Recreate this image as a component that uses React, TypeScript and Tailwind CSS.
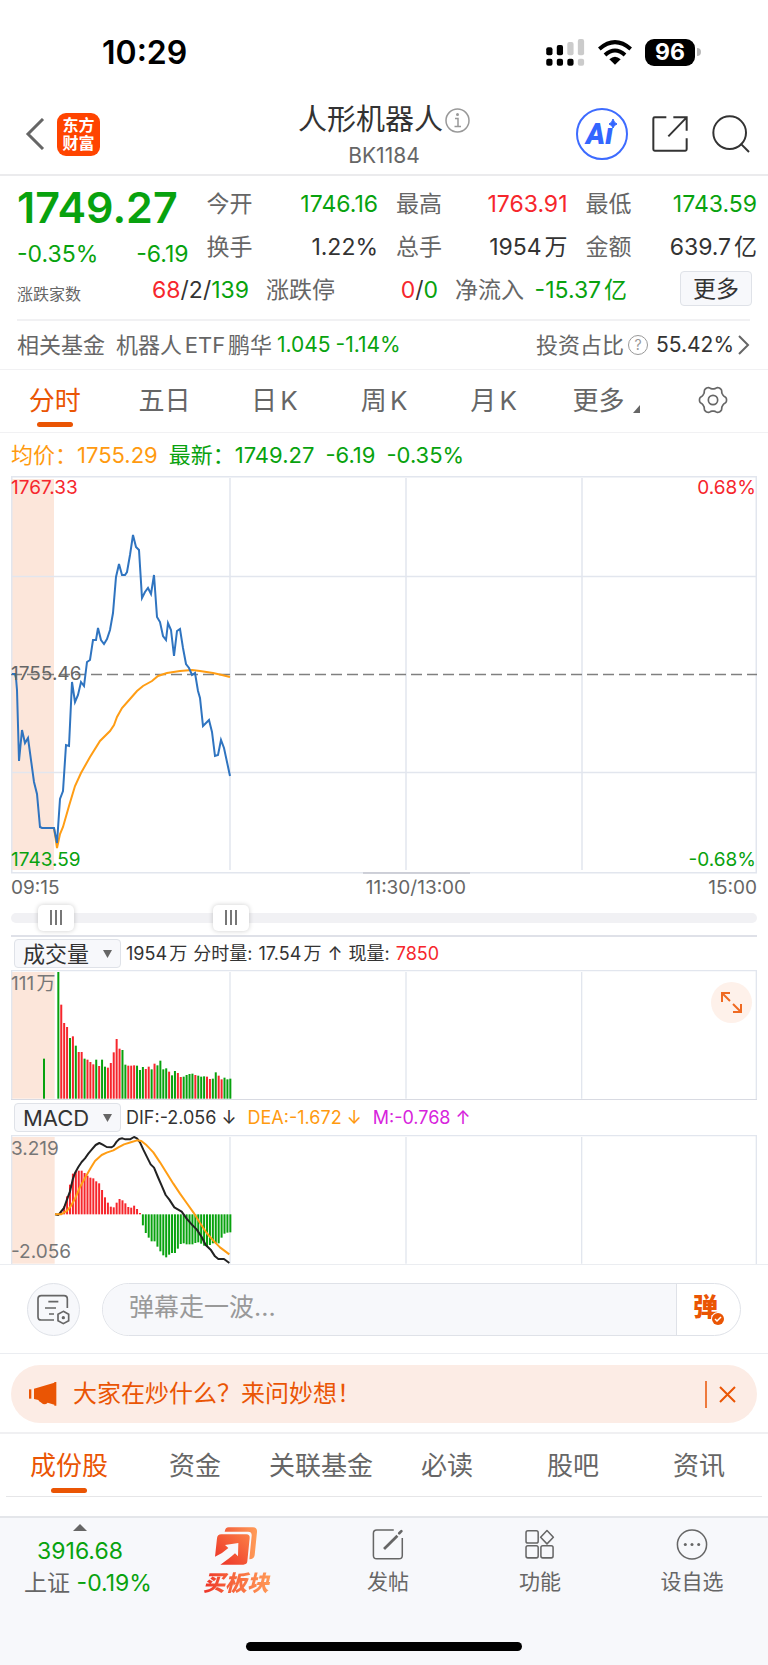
import { useState } from "react";

const priceLine =
  "1,198 4,198 5,202 6,214 8,285 11,254 14,267 17,262 23,306 26,318 29,351 31,352 43,352 46,367 49,323 52,315 55,269 58,270 61,206 64,226 67,219 70,206 73,210 76,186 79,184 82,164 85,164 87,152 90,164 93,168 96,163 99,154 102,137 105,101 108,88 111,99 114,99 116,96 119,79 122,59 125,71 128,74 131,122 134,116 137,112 140,118 143,99 146,141 149,146 152,160 155,164 157,147 160,154 163,180 166,155 169,153 172,172 175,188 178,192 181,199 184,197 187,215 189,222 192,250 198,244 201,256 204,280 207,279 210,264 213,272 219,300";

const averageLine =
  "43,352 46,372 49,358 52,351 58,330 64,310 70,297 79,281 89,265 99,255 103,249 106,241 111,232 119,223 126,215 132,210 141,205 147,200 156,197 169,195 181,194 189,195 202,197 211,199 219,201";

// [height, up/down] for every minute since the open
const volumeBars: [number, string][] = [
  [380, "d"], [282, "u"], [227, "u"], [215, "u"], [182, "d"], [187, "u"], [159, "d"], [140, "u"], [140, "u"], [120, "d"],
  [117, "u"], [110, "u"], [103, "u"], [117, "d"], [98, "u"], [117, "d"], [96, "d"], [93, "u"], [107, "u"], [139, "u"],
  [179, "u"], [150, "u"], [146, "d"], [102, "d"], [99, "u"], [99, "u"], [100, "u"], [99, "d"], [86, "d"], [95, "d"],
  [89, "u"], [96, "u"], [88, "d"], [105, "u"], [100, "d"], [114, "d"], [88, "d"], [91, "d"], [81, "u"], [70, "d"],
  [83, "d"], [77, "u"], [65, "u"], [66, "d"], [71, "d"], [74, "d"], [75, "d"], [71, "u"], [69, "d"], [66, "d"],
  [67, "d"], [66, "u"], [59, "u"], [60, "d"], [79, "d"], [69, "u"], [58, "u"], [63, "d"], [58, "d"], [60, "d"],
];

const macdBars = [
  0, 9, 24, 54, 89, 122, 127, 131, 131, 124, 116, 110, 108, 99, 93, 73, 51, 35, 23, 21, 35, 46, 42, 33, 22, 20, 26, 16, 4,
  -33, -56, -70, -81, -81, -97, -111, -123, -129, -121, -116, -116, -103, -89, -87, -90, -90, -90, -86, -84, -88, -94,
  -96, -92, -87, -87, -87, -70, -58, -55, -54,
];

const difLine =
  "132,238 142,240 150,230 159,219 167,196 177,169 185,134 192,114 202,96 212,81 222,70 232,56 242,44 254,30 265,24 275,29 287,36 301,37 308,33 317,20 325,12 334,10 343,13 357,13 369,6 378,10 387,22 397,44 407,64 419,88 429,98 442,129 452,152 464,180 475,194 490,217 512,230 527,251 542,268 557,283 572,306 584,330 599,344 612,364 622,372 639,372 655,384";

const deaLine =
  "132,238 150,238 167,228 179,214 192,191 207,156 222,129 239,99 252,78 272,60 287,53 307,46 322,37 339,28 362,21 378,16 391,18 407,31 427,52 447,82 467,114 487,146 507,176 527,204 547,232 567,264 587,294 607,317 627,337 655,358";

const GREEN = "#08a20e";
const RED = "#f6262c";

function SignalIcon() {
  return (
    <svg className="w-[39px] h-[27px]" viewBox="0 0 117 82">
      <rect x="0" y="25" width="19" height="24" rx="6" />
      <rect x="32" y="18" width="19" height="31" rx="6" />
      <rect x="64" y="9" width="19" height="40" rx="6" fill="#cbcbcb" />
      <rect x="96" y="0" width="19" height="49" rx="6" fill="#cbcbcb" />
      <rect x="0" y="60" width="19" height="21" rx="6" />
      <rect x="32" y="60" width="19" height="21" rx="6" />
      <rect x="64" y="60" width="19" height="21" rx="6" />
      <rect x="96" y="60" width="19" height="21" rx="6" fill="#cbcbcb" />
    </svg>
  );
}

function WifiIcon() {
  return (
    <svg className="w-[34px] h-[25px]" viewBox="0 0 102 75" fill="none" stroke="#000" strokeWidth="12">
      <path d="M4 27 Q51 -14 98 27" />
      <path d="M21 45 Q51 18 81 45" />
      <path d="M51 74 L34 58 Q51 43 68 58 Z" fill="#000" stroke="none" />
    </svg>
  );
}

function StatusBar() {
  return (
    <div className="h-[98px] pt-[6px] pl-[102px] pr-[67px] flex items-center justify-between">
      <span className="pt-[2px] text-[32px] leading-[40px] font-semibold text-black">10:29</span>
      <div className="flex items-center gap-[13px]">
        <SignalIcon />
        <WifiIcon />
        <div className="flex items-center gap-[2px]">
          <span className="w-[50px] h-[27px] rounded-[9px] bg-black text-white text-[23px] leading-[27px] font-bold text-center">
            96
          </span>
          <span className="w-[4px] h-[8px] rounded-r-full bg-[#b8b8b8]" />
        </div>
      </div>
    </div>
  );
}

function AiIcon() {
  return (
    <svg className="w-[52px] h-[52px]" viewBox="0 0 52 52">
      <circle cx="26" cy="26" r="25" fill="none" stroke="#3d6bff" strokeWidth="2" />
      <text x="10" y="36" fontFamily="Roboto" fontSize="29" fontWeight="900" fontStyle="italic" fill="#3366ff">
        Ai
      </text>
      <rect x="31" y="10" width="12" height="10" fill="#fff" />
      <path d="M37 11 Q38 15 41 16 Q38 17 37 20 Q36 17 33 16 Q36 15 37 11 Z" fill="#3366ff" stroke="#3366ff" />
    </svg>
  );
}

function Header() {
  return (
    <header className="h-[78px] px-[18px] pb-1 grid grid-cols-[1fr_auto_1fr] items-center border-b-2 border-[#ebebed]">
      <div className="flex items-center gap-3 pl-[7px]">
        <button aria-label="返回">
          <svg className="w-[20px] h-[32px]" viewBox="0 0 20 32" fill="none" stroke="#666" strokeWidth="3">
            <path d="M18 1 L3 16 L18 31" />
          </svg>
        </button>
        <div className="w-[43px] h-[43px] rounded-[9px] bg-[#ff4400] flex flex-col items-center justify-center text-white text-[16px] leading-[18px] font-bold">
          <span>东方</span>
          <span>财富</span>
        </div>
      </div>
      <div className="text-center">
        <h1 className="flex items-center justify-center gap-[2px] text-[29px] leading-[44px] text-[#333]">
          人形机器人
          <svg className="w-[25px] h-[25px]" viewBox="0 0 25 25" fill="none" stroke="#999">
            <circle cx="12.500" cy="12.500" r="11.500" strokeWidth="1.500" />
            <path d="M10 10.500 H13 V18.500 M9.500 18.500 H16" strokeWidth="1.500" />
            <circle cx="12.500" cy="6.500" r="1.500" fill="#999" stroke="none" />
          </svg>
        </h1>
        <p className="text-[21px] leading-[28px] text-[#666]">BK1184</p>
      </div>
      <div className="flex items-center justify-end gap-6">
        <button aria-label="AI">
          <AiIcon />
        </button>
        <button aria-label="分享">
          <svg className="w-[36px] h-[36px]" viewBox="0 0 108 108" fill="none" stroke="#333" strokeWidth="6">
            <path d="M43 4 H8 Q4 4 4 8 V100 Q4 104 8 104 H100 Q104 104 104 100 V67" />
            <path d="M64 4 H104 V44 M104 4 L49 61" />
          </svg>
        </button>
        <button aria-label="搜索">
          <svg className="w-[38px] h-[38px]" viewBox="0 0 114 114" fill="none" stroke="#333" strokeWidth="6">
            <circle cx="53" cy="53" r="49" />
            <path d="M86 86 L111 111" />
          </svg>
        </button>
      </div>
    </header>
  );
}

function Quote({ label, value, color }: { label: string; value: string; color: string }) {
  return (
    <div className="h-[43px] flex items-center justify-between">
      <span className="text-[#666]">{label}</span>
      <span className={color}>{value}</span>
    </div>
  );
}

function QuoteBoard() {
  return (
    <section className="pl-[17px] pr-[11px] pt-[7px] text-[23px] text-[#333]">
      <div className="grid grid-cols-4 gap-x-[18px]">
        <div className="row-span-2 flex flex-col justify-between text-[#08a20e]">
          <span className="text-[43px] leading-[48px] font-semibold">1749.27</span>
          <div className="flex justify-between leading-[30px]">
            <span>-0.35%</span>
            <span>-6.19</span>
          </div>
        </div>
        <Quote label="今开" value="1746.16" color="text-[#08a20e]" />
        <Quote label="最高" value="1763.91" color="text-[#f6262c]" />
        <Quote label="最低" value="1743.59" color="text-[#08a20e]" />
        <Quote label="换手" value="1.22%" color="text-[#333]" />
        <Quote label="总手" value="1954万" color="text-[#333]" />
        <Quote label="金额" value="639.7亿" color="text-[#333]" />
      </div>
      <div className="h-[43px] grid grid-cols-[232fr_172fr_172fr_113fr] gap-x-[17px] items-center">
        <div className="flex items-center justify-between">
          <span className="text-base text-[#666] pt-[6px]">涨跌家数</span>
          <span>
            <span className="text-[#f6262c]">68</span>/2/<span className="text-[#08a20e]">139</span>
          </span>
        </div>
        <div className="flex items-center justify-between">
          <span className="text-[#666]">涨跌停</span>
          <span>
            <span className="text-[#f6262c]">0</span>/<span className="text-[#08a20e]">0</span>
          </span>
        </div>
        <div className="flex items-center justify-between">
          <span className="text-[#666]">净流入</span>
          <span className="text-[#08a20e]">-15.37亿</span>
        </div>
        <button className="justify-self-end mr-[5px] mb-1 w-[72px] h-[35px] rounded border border-[#dfe2e8] bg-[#f7f8fb] leading-[32px]">
          更多
        </button>
      </div>
      <div className="mt-[7px] mr-[7px] h-[50px] border-t-2 border-[#f1f1f3] flex items-center justify-between text-[21px]">
        <div className="flex items-center gap-[5px]">
          <span className="mr-[6px] text-[22px] text-[#666]">相关基金</span>
          <span className="text-[22px] text-[#666]">机器人ETF鹏华</span>
          <span className="text-[#08a20e]">1.045</span>
          <span className="text-[#08a20e]">-1.14%</span>
        </div>
        <div className="flex items-center gap-[4px]">
          <span className="text-[22px] text-[#666]">投资占比</span>
          <span className="w-[20px] h-[20px] mr-1 rounded-full border border-[#999] text-[#999] text-sm leading-[18px] text-center">
            ?
          </span>
          <span>55.42%</span>
          <svg className="w-[12px] h-[20px]" viewBox="0 0 12 20" fill="none" stroke="#666" strokeWidth="2">
            <path d="M1 1 L10 10 L1 19" />
          </svg>
        </div>
      </div>
    </section>
  );
}

function GearIcon() {
  const points = Array.from({ length: 72 }, (_, i) => {
    const angle = (i / 72) * Math.PI * 2;
    const r = 37 + 4 * Math.tanh(1.5 * Math.cos(6 * angle));
    return `${45 + r * Math.cos(angle)},${45 + r * Math.sin(angle)}`;
  });
  return (
    <svg className="w-[30px] h-[30px]" viewBox="0 0 90 90" fill="none" stroke="#666" strokeWidth="5">
      <polygon points={points.join(" ")} strokeLinejoin="round" />
      <circle cx="45" cy="45" r="14" />
    </svg>
  );
}

const periods = ["分时", "五日", "日K", "周K", "月K", "更多"];

function PeriodTabs() {
  const [active, setActive] = useState("分时");
  return (
    <nav className="h-[64px] grid grid-cols-7 border-y border-[#f1f1f3] text-[26px]">
      {periods.map((name) => (
        <button
          key={name}
          onClick={() => setActive(name)}
          className={`relative flex items-center justify-center pb-[2px] ${active === name ? "text-[#ea5504]" : "text-[#666]"} ${name === "更多" ? "pr-[10px]" : ""}`}
        >
          {name}
          {active === name && <span className="absolute bottom-[5px] w-[36px] h-[5px] rounded-full bg-[#ea5504]" />}
          {name === "更多" && (
            <svg className="absolute right-[18px] bottom-[19px] w-[7px] h-[8px]" viewBox="0 0 7 8" fill="#666">
              <path d="M7 0 V8 H0 Z" />
            </svg>
          )}
        </button>
      ))}
      <button aria-label="设置" className="flex items-center justify-center pb-[2px]">
        <GearIcon />
      </button>
    </nav>
  );
}

function PriceChart() {
  return (
    <section className="mx-[11px]">
      <div className="h-[43px] pt-[2px] flex items-center gap-[11px] text-[22px] text-[#08a20e]">
        <span className="text-[#ff9a0f]">均价：1755.29</span>
        <span>最新：1749.27</span>
        <span>-6.19</span>
        <span>-0.35%</span>
      </div>
      <div className="relative text-[19px] leading-[22px]">
        <svg className="block w-full" viewBox="0 0 746 398" fill="none">
          <rect x="1" y="3" width="42" height="391" fill="#fce6da" />
          <g stroke="#e2e6ee" strokeWidth="1.500">
            <rect x="0.750" y="0.750" width="744.500" height="396" />
            <path d="M0 100.500 H746 M0 296.500 H746 M219 2 V394 M395 2 V394 M571 2 V394" />
          </g>
          <path d="M0 198.500 H746" stroke="#808080" strokeWidth="1.500" strokeDasharray="11 5" />
          <path d="M352 397 H459" stroke="#c4c6cf" strokeWidth="1.500" />
          <polyline points={averageLine} stroke="#ff9d14" strokeWidth="2" />
          <polyline points={priceLine} stroke="#2f74c0" strokeWidth="2" />
        </svg>
        <span className="absolute left-0 top-[1px] text-[#f6262c]">1767.33</span>
        <span className="absolute right-[1px] top-[1px] text-[#f6262c]">0.68%</span>
        <span className="absolute left-0 top-[187px] text-[#666]">1755.46</span>
        <span className="absolute left-0 bottom-[3px] text-[#08a20e]">1743.59</span>
        <span className="absolute right-[1px] bottom-[3px] text-[#08a20e]">-0.68%</span>
      </div>
      <div className="h-[26px] pt-[2px] flex justify-between items-center text-[19px] leading-[24px] text-[#666]">
        <span>09:15</span>
        <span className="pl-16">11:30/13:00</span>
        <span>15:00</span>
      </div>
    </section>
  );
}

const rangeClass =
  "absolute inset-0 w-full h-full appearance-none bg-transparent pointer-events-none [&::-webkit-slider-thumb]:pointer-events-auto [&::-webkit-slider-thumb]:appearance-none [&::-webkit-slider-thumb]:w-[36px] [&::-webkit-slider-thumb]:h-[26px] [&::-webkit-slider-thumb]:rounded-[5px] [&::-webkit-slider-thumb]:bg-white [&::-webkit-slider-thumb]:bg-[linear-gradient(90deg,#777_2px,transparent_2px_5px,#777_5px_7px,transparent_7px_10px,#777_10px)] [&::-webkit-slider-thumb]:bg-[length:12px_15px] [&::-webkit-slider-thumb]:bg-no-repeat [&::-webkit-slider-thumb]:bg-center [&::-webkit-slider-thumb]:shadow-[0_0_5px_rgba(0,0,0,0.2)]";

function TimeRange() {
  return (
    <div className="relative mx-[11px] h-[35px] flex items-center">
      <div className="w-full h-[10px] rounded-full bg-[#f1f1f4]" />
      <input className={rangeClass} type="range" aria-label="开始时间" min={0} max={710} defaultValue={27} />
      <input className={rangeClass} type="range" aria-label="结束时间" min={0} max={710} defaultValue={202} />
    </div>
  );
}

function IndicatorSelect({ label, options }: { label: string; options: string[] }) {
  return (
    <div className="relative ml-[3px] mr-[5px]">
      <select
        aria-label={label}
        className="block appearance-none w-[107px] h-[29px] pl-2 rounded border border-[#dfe2e8] bg-[#f7f8fb] text-[22px] leading-[26px] text-[#333]"
      >
        {options.map((name) => (
          <option key={name}>{name}</option>
        ))}
      </select>
      <svg className="absolute right-[9px] top-[11px] w-[9px] h-[8px] pointer-events-none" viewBox="0 0 9 8" fill="#666">
        <path d="M0 0 H9 L4.500 8 Z" />
      </svg>
    </div>
  );
}

function PanelGrid() {
  return (
    <>
      <rect x="2" y="6" width="129" height="380" fill="#fce6da" />
      <g stroke="#e2e6ee" strokeWidth="4">
        <path d="M0 2 H2238 M2 0 V390 M2236 0 V390 M657 6 V386 M1185 6 V386 M1712 6 V386" />
      </g>
    </>
  );
}

function VolumePanel() {
  return (
    <section className="mx-[11px] border-t-2 border-[#dfe1e8]">
      <div className="h-[33px] flex items-center text-[18px] text-[#333]">
        <IndicatorSelect label="成交量指标" options={["成交量", "成交额"]} />
        <div className="flex gap-[6px]">
          <span>1954万</span>
          <span>分时量:</span>
          <span>17.54万</span>
          <span>↑</span>
          <span>现量:</span>
          <span className="text-[#f6262c]">7850</span>
        </div>
      </div>
      <div className="relative">
        <svg className="block w-full" viewBox="0 0 2238 390" fill="none">
          <PanelGrid />
          <path d="M0 389 H2238" stroke="#d8dae2" strokeWidth="4" />
          <rect x="96" y="266" width="6" height="120" fill={GREEN} />
          {volumeBars.map(([height, dir], i) => (
            <rect
              key={i}
              x={139 + i * 8.746}
              y={386 - height}
              width="6"
              height={height}
              fill={dir === "u" ? RED : GREEN}
            />
          ))}
        </svg>
        <span className="absolute left-0 top-[3px] text-[19px] leading-[22px] text-[#777]">111万</span>
        <button
          aria-label="全屏"
          className="absolute right-[5px] top-[12px] w-[41px] h-[41px] rounded-full bg-[#fef1ea] flex items-center justify-center"
        >
          <svg className="w-[21px] h-[21px]" viewBox="0 0 21 21" fill="none" stroke="#ef6a22" strokeWidth="2">
            <path d="M1 10 V1 H9 M1 1 L9 9" />
            <path d="M20 12 V20 H12 M20 20 L12 12" />
          </svg>
        </button>
      </div>
    </section>
  );
}

function MacdPanel() {
  return (
    <section className="mx-[11px]">
      <div className="h-[35px] flex items-center text-[18px] text-[#333]">
        <IndicatorSelect label="技术指标" options={["MACD", "KDJ", "RSI"]} />
        <div className="flex gap-[11px]">
          <span>DIF:-2.056 ↓</span>
          <span className="text-[#ff9a0f]">DEA:-1.672 ↓</span>
          <span className="text-[#d724dc]">M:-0.768 ↑</span>
        </div>
      </div>
      <div className="relative">
        <svg className="block w-full" viewBox="0 0 2238 387" fill="none">
          <PanelGrid />
          {macdBars.map((value, i) => (
            <rect
              key={i}
              x={139 + i * 8.746}
              y={value > 0 ? 238 - value : 238}
              width="6"
              height={Math.abs(value)}
              fill={value > 0 ? RED : GREEN}
            />
          ))}
          <polyline points={difLine} stroke="#222" strokeWidth="6" strokeLinejoin="round" />
          <polyline points={deaLine} stroke="#ff9d14" strokeWidth="6" strokeLinejoin="round" />
        </svg>
        <span className="absolute left-0 top-[3px] text-[19px] leading-[22px] text-[#777]">3.219</span>
        <span className="absolute left-0 bottom-[1px] text-[19px] leading-[22px] text-[#777]">-2.056</span>
      </div>
    </section>
  );
}

function BarrageBar() {
  return (
    <div className="h-[90px] pl-[27px] pr-[27px] flex items-center gap-[22px] border-y border-[#ebedf1]">
      <button
        aria-label="弹幕设置"
        className="w-[53px] h-[53px] shrink-0 rounded-full border border-[#dfe2e8] bg-[#f7f8fb] flex items-center justify-center"
      >
        <svg className="w-[35px] h-[31px]" viewBox="0 0 105 93" fill="none" stroke="#666" strokeWidth="5">
          <path d="M54 78 H16 Q6 78 6 68 V15 Q6 5 16 5 H84 Q94 5 94 15 V42" />
          <path d="M37 23 H67 M27 42 H60 M39 60 H54" />
          <path d="M82 52 L98 61 V80 L82 89 L66 80 V61 Z" fill="#f7f8fb" />
          <circle cx="82" cy="71" r="5" fill="#666" stroke="none" />
        </svg>
      </button>
      <div className="flex-1 h-[53px] flex rounded-full border border-[#dfe2e8] overflow-hidden">
        <input
          aria-label="发送弹幕"
          placeholder="弹幕走一波..."
          className="flex-1 min-w-0 pl-[26px] pb-[2px] bg-[#f7f8fb] text-[25px] placeholder:text-[#999] outline-none"
        />
        <button
          aria-label="弹幕开关"
          className="relative w-[64px] border-l border-[#dfe2e8] pr-[6px] pb-[2px] text-[25px] font-black text-[#ea5504]"
        >
          弹
          <svg className="absolute left-[34px] top-[28px] w-[14px] h-[14px]" viewBox="0 0 14 14">
            <circle cx="7" cy="7" r="7" fill="#fff" />
            <circle cx="7" cy="7" r="6" fill="#ea5504" />
            <path d="M4 7 L6 9 L10 5" fill="none" stroke="#fff" strokeWidth="1.500" />
          </svg>
        </button>
      </div>
    </div>
  );
}

function NoticeBanner() {
  return (
    <div className="h-[80px] px-[11px] pt-[11px] border-b-2 border-[#f0f0f2]">
      <div className="h-[58px] pl-[18px] pr-[21px] rounded-full bg-[#fcece5] flex items-center text-[#ea5504]">
        <svg className="w-[28px] h-[24px]" viewBox="0 0 84 72" fill="#ea5504">
          <path d="M0 22 H7 V50 H0 Z" />
          <path d="M15 20 L76 2 V0 H82 V71 H76 V68 L56 62 Q50 68 42 66 L34 60 Q30 58 28 54 L15 51 Z" />
        </svg>
        <span className="ml-[16px] text-[24px]">大家在炒什么？来问妙想！</span>
        <span className="ml-auto w-[2px] h-[27px] bg-[#ee7a3d]" />
        <button aria-label="关闭" className="ml-[12px]">
          <svg className="w-[17px] h-[17px]" viewBox="0 0 17 17" fill="none" stroke="#ea5504" strokeWidth="2">
            <path d="M1 1 L16 16 M16 1 L1 16" />
          </svg>
        </button>
      </div>
    </div>
  );
}

const sections = ["成份股", "资金", "关联基金", "必读", "股吧", "资讯"];

function SectionTabs() {
  const [active, setActive] = useState("成份股");
  return (
    <nav className="mx-[6px] mb-[19px] h-[63px] grid grid-cols-6 border-b border-[#e6e6e8] text-[26px]">
      {sections.map((name) => (
        <button
          key={name}
          onClick={() => setActive(name)}
          className={`relative flex items-center justify-center ${active === name ? "text-[#ea5504]" : "text-[#666]"}`}
        >
          {name}
          {active === name && <span className="absolute bottom-[3px] w-[36px] h-[5px] rounded-full bg-[#ea5504]" />}
        </button>
      ))}
    </nav>
  );
}

function BuyIcon() {
  return (
    <svg className="w-[42px] h-[38px]" viewBox="0 0 126 114">
      <defs>
        <linearGradient id="front" x1="0" y1="1" x2="1" y2="0">
          <stop offset="0" stopColor="#ec3026" />
          <stop offset="1" stopColor="#fb7f46" />
        </linearGradient>
        <linearGradient id="back" x1="0" y1="0" x2="1" y2="0">
          <stop offset="0" stopColor="#f4603c" />
          <stop offset="1" stopColor="#ff9c58" />
        </linearGradient>
      </defs>
      <path d="M29 14 Q31 1 41 1 H114 Q127 1 126 15 L119 85 Q117 97 103 97 L110 26 Q111 14 99 14 Z" fill="url(#back)" />
      <path d="M19 22 H94 Q105 22 104 33 L97 103 Q96 113 85 113 H16 Q44 94 60 79 L69 88 L70 48 L30 54 L40 63 Q22 80 0 89 L6 34 Q7 22 19 22 Z" fill="url(#front)" />
    </svg>
  );
}

function BottomBar() {
  return (
    <footer className="border-t-2 border-[#e4e6ea] bg-[#f7f8fb] text-[21px] text-[#666]">
      <div className="h-[124px] grid grid-cols-[160px_repeat(4,1fr)] justify-items-center">
        <button className="h-[80px] flex flex-col items-center text-[23px]">
          <svg className="mt-[6px] mb-[4px] shrink-0 w-[14px] h-[7px]" viewBox="0 0 14 7" fill="#666">
            <path d="M7 0 L14 7 H0 Z" />
          </svg>
          <span className="leading-[32px] text-[#08a20e]">3916.68</span>
          <span className="leading-[32px] pl-4">
            上证 <span className="text-[#08a20e]">-0.19%</span>
          </span>
        </button>
        <button className="h-[80px] pt-[9px] flex flex-col items-center gap-[3px]">
          <BuyIcon />
          <span className="px-1 text-[22px] leading-[30px] font-black italic bg-linear-to-r from-[#ec2424] to-[#ff9c58] bg-clip-text text-transparent">
            买板块
          </span>
        </button>
        <button className="h-[80px] pt-[11px] flex flex-col items-center gap-[6px]">
          <svg className="w-[34px] h-[34px]" viewBox="0 0 102 102" fill="none" stroke="#666" strokeWidth="5">
            <path d="M70 3 H14 Q3 3 3 14 V87 Q3 98 14 98 H87 Q98 98 98 87 V30" />
            <path d="M38 66 L82 22" strokeWidth="9" />
            <path d="M88 14 L95 7" strokeWidth="9" strokeLinecap="round" />
          </svg>
          <span className="leading-[32px]">发帖</span>
        </button>
        <button className="h-[80px] pt-[11px] flex flex-col items-center gap-[6px]">
          <svg className="w-[34px] h-[34px]" viewBox="0 0 102 102" fill="none" stroke="#666" strokeWidth="5">
            <rect x="5" y="6" width="40" height="40" rx="6" />
            <rect x="5" y="55" width="40" height="40" rx="6" />
            <rect x="54" y="55" width="40" height="40" rx="6" />
            <path d="M74 5 L95 27 L74 49 L53 27 Z" strokeLinejoin="round" />
          </svg>
          <span className="leading-[32px]">功能</span>
        </button>
        <button className="h-[80px] pt-[11px] flex flex-col items-center gap-[6px]">
          <svg className="w-[34px] h-[34px]" viewBox="0 0 102 102" fill="none" stroke="#666" strokeWidth="5">
            <circle cx="51" cy="51" r="48" />
            <g fill="#666" stroke="none">
              <circle cx="29" cy="51" r="5" />
              <circle cx="51" cy="51" r="5" />
              <circle cx="73" cy="51" r="5" />
            </g>
          </svg>
          <span className="leading-[32px]">设自选</span>
        </button>
      </div>
      <div className="h-[23px] flex justify-center">
        <div className="w-[36%] h-[9px] rounded-full bg-black" />
      </div>
    </footer>
  );
}

export default function App() {
  return (
    <main className="min-h-screen bg-white font-['Inter','Noto_Sans_CJK_SC',sans-serif] [text-autospace:normal]">
      <StatusBar />
      <Header />
      <QuoteBoard />
      <PeriodTabs />
      <PriceChart />
      <TimeRange />
      <VolumePanel />
      <MacdPanel />
      <BarrageBar />
      <NoticeBanner />
      <SectionTabs />
      <BottomBar />
    </main>
  );
}
